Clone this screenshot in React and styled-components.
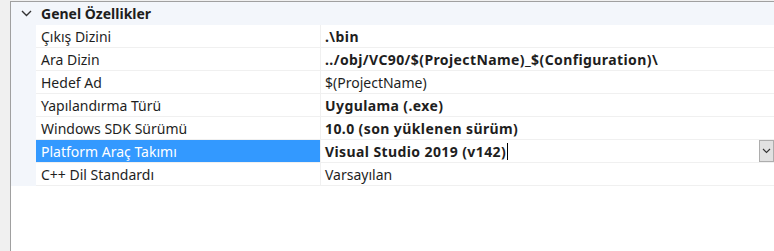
import React from "react";
import styled, { createGlobalStyle } from "styled-components";

const Global = createGlobalStyle`
  html, body { margin: 0; padding: 0; background: #f0f0f0; }
  body { font-family: "Noto Sans", "Open Sans", sans-serif; }
`;

const Frame = styled.div`
  width: 774px;
  height: 251px;
  display: flex;
  background: #f0f0f0;
  overflow: hidden;
`;

const Grid = styled.div`
  margin-left: 10px;
  margin-top: 1px;
  flex: 1;
  background: #ffffff;
  border-left: 1px solid #a0a0a0;
  border-top: 1px solid #a0a0a0;
  display: flex;
  flex-direction: column;
`;

const Header = styled.div`
  height: 23px;
  display: flex;
  align-items: center;
  background: #f3f6fb;
  font-size: 14px;
  font-weight: 700;
  color: #1e1e1e;
`;

const Chevron = styled.span`
  width: 29px;
  display: flex;
  justify-content: center;
  padding-left: 1px;
`;

const Row = styled.div`
  height: 23px;
  display: flex;
  border-left: 25px solid #f3f6fb;
  font-size: 14px;
  color: #1e1e1e;
`;

const Name = styled.div`
  width: 279px;
  padding-left: 5px;
  display: flex;
  align-items: center;
  border-bottom: 1px solid #f0f0f0;
  border-right: 1px solid #f0f0f0;
  background: ${(p) => (p.selected ? "#3399ff" : "transparent")};
  color: ${(p) => (p.selected ? "#ffffff" : "inherit")};
`;

const Value = styled.div`
  flex: 1;
  padding-left: 4px;
  display: flex;
  align-items: center;
  border-bottom: 1px solid #f0f0f0;
  font-weight: ${(p) => (p.bold ? 700 : 400)};
  letter-spacing: ${(p) => (p.bold ? "0.4px" : "0")};
`;

const Caret = styled.span`
  width: 1px;
  height: 17px;
  background: #000;
  margin-left: 1px;
`;

const DropButton = styled.div`
  margin-left: auto;
  width: 13px;
  height: 20px;
  background: #e1e1e1;
  border: 1px solid #adadad;
  display: flex;
  align-items: center;
  justify-content: center;
`;

const rows = [
  { name: "Çıkış Dizini", value: ".\\bin", bold: true },
  { name: "Ara Dizin", value: "../obj/VC90/$(ProjectName)_$(Configuration)\\", bold: true },
  { name: "Hedef Ad", value: "$(ProjectName)" },
  { name: "Yapılandırma Türü", value: "Uygulama (.exe)", bold: true },
  { name: "Windows SDK Sürümü", value: "10.0 (son yüklenen sürüm)", bold: true },
  { name: "Platform Araç Takımı", value: "Visual Studio 2019 (v142)", bold: true, selected: true },
  { name: "C++ Dil Standardı", value: "Varsayılan" },
];

export default function App() {
  return (
    <Frame>
      <Global />
      <Grid>
        <Header>
          <Chevron>
            <svg width="11" height="7" viewBox="0 0 11 7">
              <path d="M1 1l4.5 4.5L10 1" fill="none" stroke="#333" strokeWidth="1.4" />
            </svg>
          </Chevron>
          Genel Özellikler
        </Header>
        {rows.map((r) => (
          <Row key={r.name}>
            <Name selected={r.selected}>{r.name}</Name>
            <Value bold={r.bold}>
              {r.value}
              {r.selected && <Caret />}
              {r.selected && (
                <DropButton>
                  <svg width="9" height="6" viewBox="0 0 9 6">
                    <path d="M1 1l3.5 3.5L8 1" fill="none" stroke="#333" strokeWidth="1.1" />
                  </svg>
                </DropButton>
              )}
            </Value>
          </Row>
        ))}
      </Grid>
    </Frame>
  );
}
